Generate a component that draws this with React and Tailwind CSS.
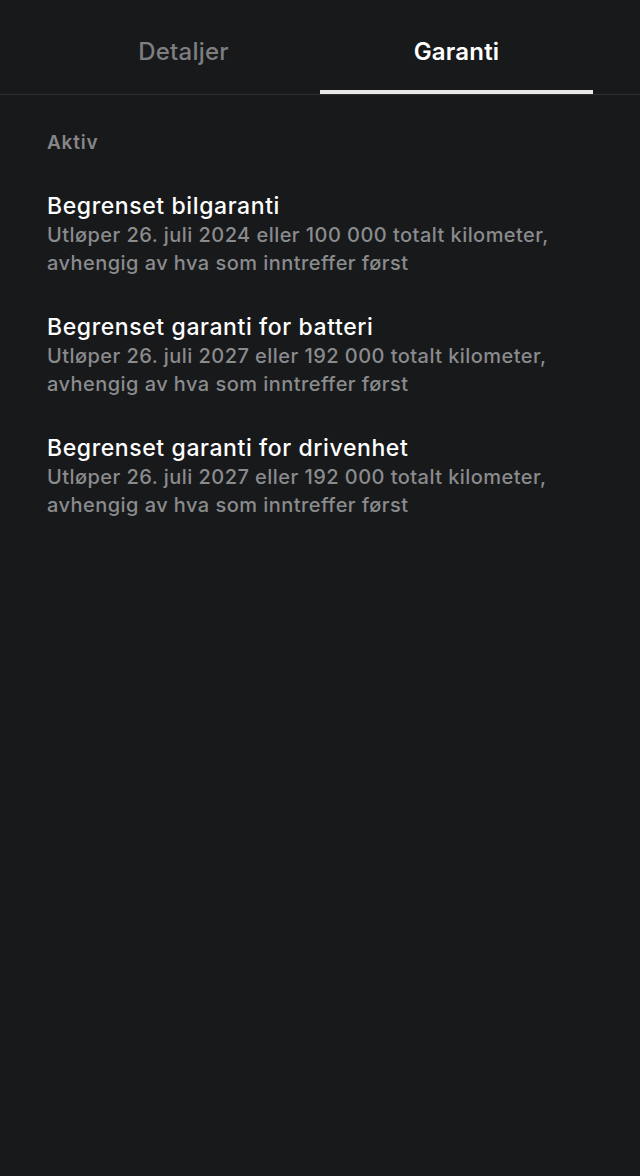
import React from "react";

const warranties = [
    {
        title: "Begrenset bilgaranti",
        text: "Utløper 26. juli 2024 eller 100 000 totalt kilometer, avhengig av hva som inntreffer først",
    },
    {
        title: "Begrenset garanti for batteri",
        text: "Utløper 26. juli 2027 eller 192 000 totalt kilometer, avhengig av hva som inntreffer først",
    },
    {
        title: "Begrenset garanti for drivenhet",
        text: "Utløper 26. juli 2027 eller 192 000 totalt kilometer, avhengig av hva som inntreffer først",
    },
];

const App = () => {
    return (
        <div
            className="min-h-[1176px] w-[640px] bg-[#18191b] antialiased"
            style={{ fontFamily: "Inter, 'Noto Sans', sans-serif" }}
        >
            {/* Tabs */}
            <div className="border-b border-[#2e2f31] px-[47px]">
                <div className="grid grid-cols-2">
                    <div className="flex h-[94px] items-center justify-center pt-[10px] text-[24px] font-medium tracking-[0.2px] text-[#7d7e80]">
                        Detaljer
                    </div>
                    <div className="relative flex h-[94px] items-center justify-center pt-[10px] text-[24px] font-semibold tracking-[0.2px] text-white">
                        Garanti
                        <div className="absolute bottom-0 left-0 right-0 h-[4px] bg-[#e8e8e8]" />
                    </div>
                </div>
            </div>

            {/* Content */}
            <div className="px-[47px] pt-[34px]">
                <div className="text-[19px] font-semibold leading-[28px] tracking-[0.8px] text-[#858688]">Aktiv</div>

                <div className="mt-[34px] flex flex-col gap-[35px]">
                    {warranties.map((w) => (
                        <div key={w.title}>
                            <div className="text-[23px] font-medium leading-[30px] tracking-[0.6px] text-white">
                                {w.title}
                            </div>
                            <div className="w-[520px] text-[20px] font-medium leading-[28px] tracking-[0.45px] text-[#8a8b8d]">
                                {w.text}
                            </div>
                        </div>
                    ))}
                </div>
            </div>
        </div>
    );
};

export default App;
